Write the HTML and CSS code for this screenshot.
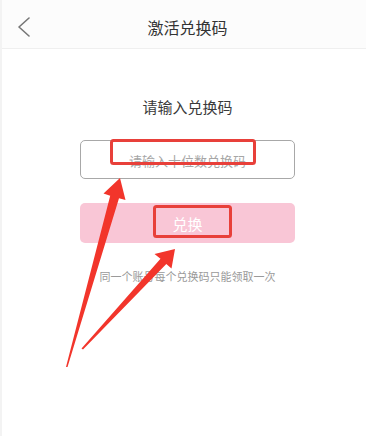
FILE: index.html
```html
<!DOCTYPE html>
<html lang="zh-CN">
<head>
<meta charset="utf-8">
<title>激活兑换码</title>
<link rel="stylesheet" href="styles.css">
</head>
<body>
<div class="page">
  <header class="header">
    <svg class="back" width="14" height="20" viewBox="0 0 14 20"><path d="M12 1 L2 10 L12 19" fill="none" stroke="#777" stroke-width="1.6" stroke-linecap="round" stroke-linejoin="round"/></svg>
    <h1 class="title">激活兑换码</h1>
  </header>
  <main class="content">
    <div class="label">请输入兑换码</div>
    <input class="code-input" type="text" placeholder="请输入十位数兑换码">
    <button class="submit" type="button">兑换</button>
    <p class="note">同一个账号每个兑换码只能领取一次</p>
  </main>
</div>
<svg class="annot" width="366" height="436" viewBox="0 0 366 436">
  <rect x="111.5" y="140.5" width="143" height="23" rx="2" fill="none" stroke="#e8403a" stroke-width="3"/>
  <rect x="154.5" y="206.5" width="76" height="30" rx="2" fill="none" stroke="#e8403a" stroke-width="3"/>
  <polygon points="120,178 125.5,200 119,198.2 67.5,367 66,367 110.2,195.8 103.5,193.5" fill="#f2352b"/>
  <polygon points="175,249 171.5,268.5 166.3,264.1 83,349.5 81.5,348.5 160.5,258.7 154.5,254" fill="#f2352b"/>
</svg>
</body>
</html>
```

FILE: styles.css
```css
html, body {
  margin: 0;
  padding: 0;
  background: #ffffff;
}
body {
  font-family: "Noto Sans CJK SC", "Noto Sans", sans-serif;
  width: 366px;
  height: 436px;
  overflow: hidden;
  position: relative;
}
.page {
  height: 436px;
  border-left: 2px solid #f3f3f3;
  box-sizing: border-box;
}
.header {
  height: 48px;
  border-bottom: 1px solid #efefef;
  background: #fcfcfc;
  display: flex;
  align-items: center;
  justify-content: center;
  position: relative;
  padding-left: 7px;
}
.back {
  position: absolute;
  left: 15px;
  top: 17px;
}
.title {
  margin: 0;
  font-size: 16px;
  font-weight: normal;
  color: #333;
  line-height: 22px;
  margin-top: 6px;
}
.content {
  width: 215px;
  margin: 0 auto;
  padding-left: 7px;
  padding-top: 47px;
  display: flex;
  flex-direction: column;
  align-items: center;
  box-sizing: content-box;
}
.label {
  font-size: 15px;
  line-height: 22px;
  color: #3a3a3a;
}
.code-input {
  margin-top: 22px;
  width: 215px;
  height: 39px;
  box-sizing: border-box;
  border: 1px solid #a8a8a8;
  border-radius: 5px;
  outline: none;
  text-align: center;
  font-family: inherit;
  font-size: 13px;
  color: #333;
  padding: 2px 0 0;
}
.code-input::placeholder {
  color: #a6a6a6;
}
.submit {
  margin-top: 24px;
  width: 215px;
  height: 40px;
  border: none;
  border-radius: 5px;
  background: #f9c6d6;
  color: #ffffff;
  font-family: inherit;
  font-size: 15px;
  padding: 0;
}
.note {
  margin: 25px 0 0;
  font-size: 11px;
  line-height: 16px;
  color: #9a9a9a;
  white-space: nowrap;
}
.annot {
  position: absolute;
  left: 0;
  top: 0;
  pointer-events: none;
}
```
